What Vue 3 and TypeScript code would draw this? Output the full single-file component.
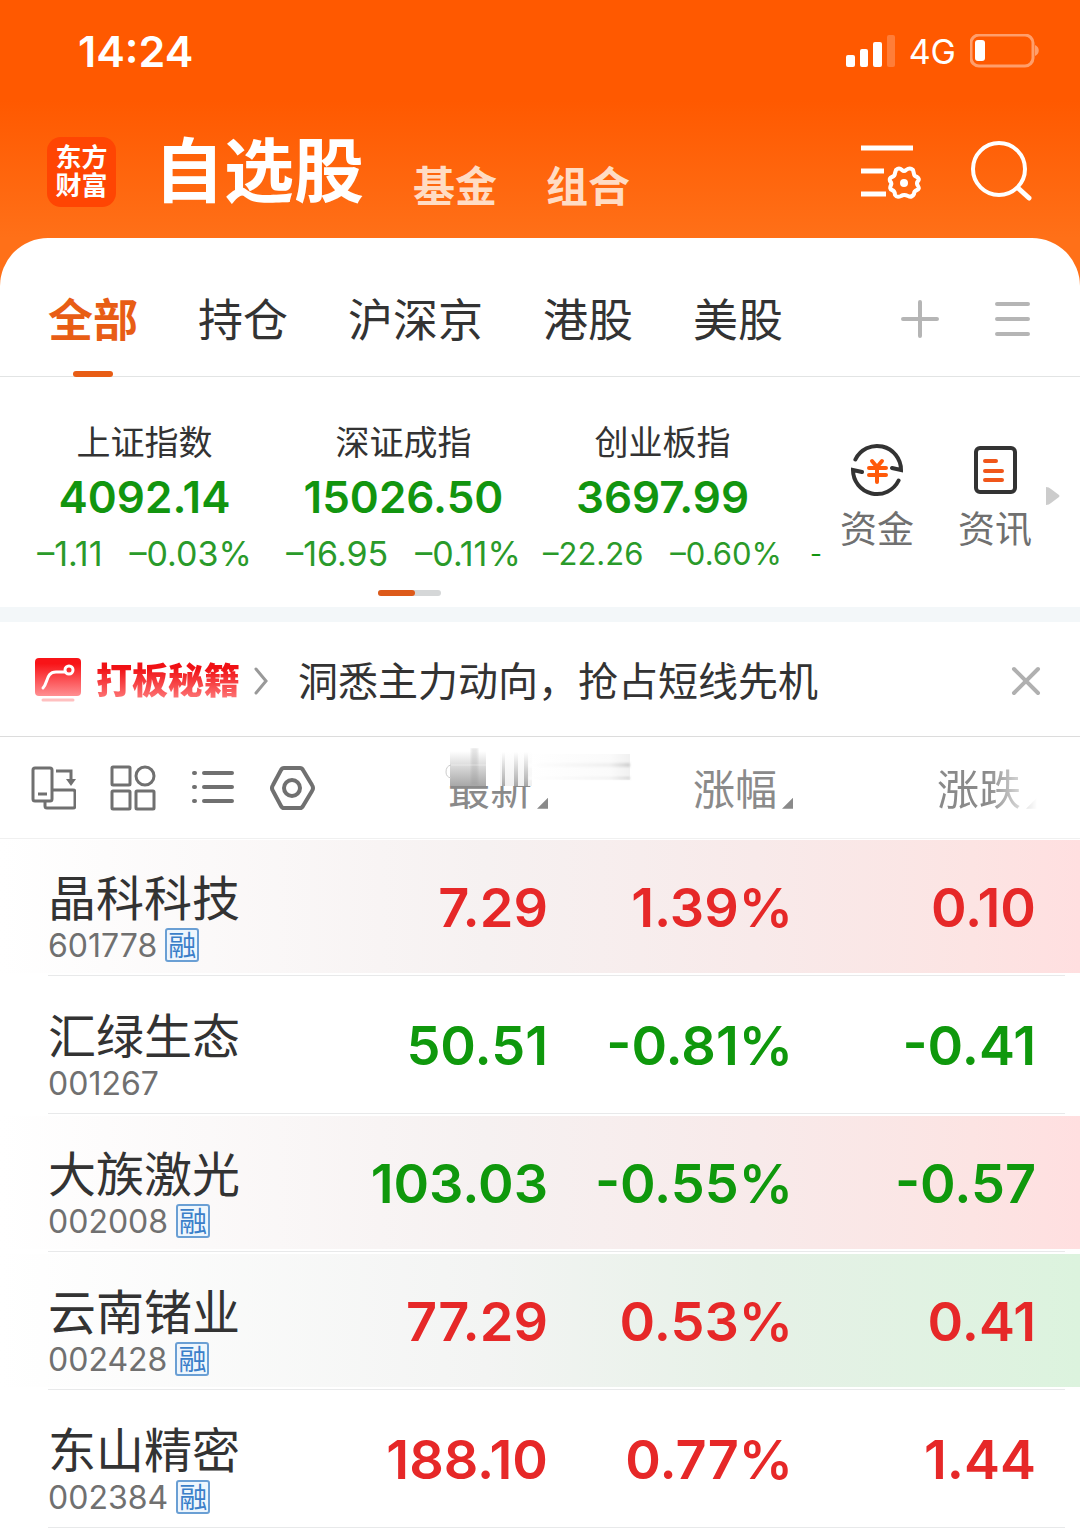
<script setup lang="ts">
import { ref } from 'vue'

interface IndexQuote { name: string; value: string; change: string; percent: string; small?: boolean }
interface Stock {
  name: string; code: string; margin: boolean
  price: string; percent: string; change: string
  trend: 'up' | 'down'; tint: 'red' | 'green' | 'none'
}

const tabs = ['全部', '持仓', '沪深京', '港股', '美股']
const activeTab = ref('全部')
const showPromo = ref(true)

const indices: IndexQuote[] = [
  { name: '上证指数', value: '4092.14', change: '–1.11', percent: '–0.03%' },
  { name: '深证成指', value: '15026.50', change: '–16.95', percent: '–0.11%' },
  { name: '创业板指', value: '3697.99', change: '–22.26', percent: '–0.60%', small: true },
]

const stocks: Stock[] = [
  { name: '晶科科技', code: '601778', margin: true, price: '7.29', percent: '1.39%', change: '0.10', trend: 'up', tint: 'red' },
  { name: '汇绿生态', code: '001267', margin: false, price: '50.51', percent: '-0.81%', change: '-0.41', trend: 'down', tint: 'none' },
  { name: '大族激光', code: '002008', margin: true, price: '103.03', percent: '-0.55%', change: '-0.57', trend: 'down', tint: 'red' },
  { name: '云南锗业', code: '002428', margin: true, price: '77.29', percent: '0.53%', change: '0.41', trend: 'up', tint: 'green' },
  { name: '东山精密', code: '002384', margin: true, price: '188.10', percent: '0.77%', change: '1.44', trend: 'up', tint: 'none' },
]
</script>

<template>
  <div class="app">
    <header class="top">
      <div class="status">
        <time class="clock">14:24</time>
        <div class="signals">
          <svg width="50" height="34" viewBox="0 0 50 34" aria-hidden="true">
            <rect x="1" y="21" width="9" height="12" rx="2" fill="#fff" />
            <rect x="15" y="15" width="8" height="18" rx="2" fill="#fff" />
            <rect x="28" y="8" width="9" height="25" rx="2" fill="#fff" />
            <rect x="42" y="1" width="8" height="32" rx="2" fill="#fff" fill-opacity=".22" />
          </svg>
          <span class="network">4G</span>
          <svg width="70" height="34" viewBox="0 0 70 34" aria-hidden="true">
            <rect x="1" y="1" width="62" height="31" rx="8" fill="none" stroke="#fff" stroke-opacity=".42" stroke-width="3" />
            <rect x="5" y="6" width="10" height="21" rx="3" fill="#fff" />
            <path d="M65 11c5 2 5 9 0 11z" fill="#fff" fill-opacity=".42" />
          </svg>
        </div>
      </div>
      <div class="titlebar">
        <div class="logo"><span>东方</span><span>财富</span></div>
        <nav class="sections">
          <h1>自选股</h1>
          <a href="#fund">基金</a>
          <a href="#group">组合</a>
        </nav>
        <div class="tools">
          <button type="button" aria-label="设置">
            <svg width="62" height="56" viewBox="0 0 62 56" fill="none" stroke="#fff" stroke-width="5">
              <path d="M1 4h52M1 27h23M1 50h25" />
              <path stroke-width="4" stroke-linejoin="round" d="M36 26Q39 23 42 26Q44 28 46 26Q50 23 53 26L54 30Q54 32 57 33Q60 35 58 37Q56 39 58 42Q60 45 57 46Q54 47 54 50Q52 54 48 52Q44 50 41 52Q37 54 35 51Q35 47 32 46Q29 45 31 41Q32 39 30 37Q29 34 32 33Q35 32 35 29Z" />
              <circle cx="44" cy="39" r="4" fill="#fff" stroke="none" />
            </svg>
          </button>
          <button type="button" aria-label="搜索">
            <svg width="62" height="62" viewBox="0 0 62 62" fill="none" stroke="#fff" stroke-width="4" stroke-linecap="round">
              <circle cx="29" cy="28" r="26" />
              <path d="M48 47l11 10" stroke-width="5" />
            </svg>
          </button>
        </div>
      </div>
    </header>

    <main class="sheet">
      <nav class="tabs">
        <button
          v-for="tab in tabs" :key="tab" type="button"
          :class="['tab', { active: tab === activeTab }]" @click="activeTab = tab"
        >{{ tab }}</button>
        <div class="tab-tools">
          <button type="button" aria-label="添加">
            <svg width="38" height="38" viewBox="0 0 38 38" stroke="#b5b5b5" stroke-width="4" stroke-linecap="round"><path d="M2 19h34M19 2v34" /></svg>
          </button>
          <button type="button" aria-label="菜单">
            <svg width="36" height="38" viewBox="0 0 36 38" stroke="#b5b5b5" stroke-width="4" stroke-linecap="round"><path d="M3 4h31M3 19h31M3 34h31" /></svg>
          </button>
        </div>
      </nav>

      <section class="market">
        <div class="indices">
          <article v-for="item in indices" :key="item.name" class="index">
            <h2>{{ item.name }}</h2>
            <strong>{{ item.value }}</strong>
            <p :class="{ small: item.small }"><span>{{ item.change }}</span><span>{{ item.percent }}</span></p>
          </article>
          <span class="next-index">-</span>
          <div class="pager"><i></i></div>
        </div>
        <div class="shortcuts">
          <a href="#capital">
            <svg width="54" height="54" viewBox="0 0 54 54" fill="none" stroke="#333" stroke-width="4">
              <path d="M5.400 16.500A24 24 0 0 1 51 27L42 25" stroke-linecap="round" />
              <path d="M48.600 37.500A24 24 0 0 1 3 27L12 29" stroke-linecap="round" />
              <path d="M22 18l5 6 5-6M19 25h17M19 32h17M27 24v15" stroke="#ff5a0a" stroke-linecap="round" />
            </svg>
            资金
          </a>
          <a href="#news">
            <svg width="54" height="54" viewBox="0 0 54 54" fill="none" stroke="#333" stroke-width="4">
              <rect x="8" y="5" width="39" height="44" rx="4" />
              <path d="M17 18h11M17 28h17M17 37h17" stroke="#f0561a" stroke-linecap="round" />
            </svg>
            资讯
          </a>
          <svg class="more" width="14" height="18" viewBox="0 0 14 18" aria-hidden="true"><path d="M0 0q3 0 5 2l8 6q1 1 0 2l-8 6q-2 2-5 2z" fill="#ccc" /></svg>
        </div>
      </section>

      <section v-if="showPromo" class="promo">
        <svg width="48" height="46" viewBox="0 0 48 46" fill="none" aria-hidden="true">
          <defs>
            <linearGradient id="promo-fill" x1="0" y1="0" x2="0" y2="1"><stop offset=".15" stop-color="#f81418" /><stop offset="1" stop-color="#ff8f92" /></linearGradient>
          </defs>
          <rect x="1" y="0" width="46" height="38" rx="4" fill="url(#promo-fill)" />
          <path d="M9 30C14 25 12 14 22 14H31" stroke="#fff" stroke-width="3" stroke-linecap="round" />
          <circle cx="35" cy="12" r="4" stroke="#fff" stroke-width="3" />
          <path d="M9 42h30" stroke="#ffc0c0" stroke-width="3" stroke-linecap="round" />
        </svg>
        <b>打板秘籍</b>
        <svg width="14" height="28" viewBox="0 0 14 28" fill="none" aria-hidden="true"><path d="M2 2l10 12L2 26" stroke="#999" stroke-width="3" stroke-linecap="round" /></svg>
        <a href="#promo">洞悉主力动向，抢占短线先机</a>
        <button type="button" aria-label="关闭" @click="showPromo = false">
          <svg width="30" height="30" viewBox="0 0 30 30" stroke="#b0b0b0" stroke-width="4" stroke-linecap="round"><path d="M3 3l24 24M27 3L3 27" /></svg>
        </button>
      </section>

      <table class="quotes">
        <colgroup><col class="col-name" /><col class="col-price" /><col class="col-percent" /><col class="col-change" /></colgroup>
        <thead>
          <tr>
            <th scope="col">
              <div class="views">
                <button type="button" aria-label="横屏">
                  <svg width="46" height="46" viewBox="0 0 46 46" fill="none" stroke="#707070" stroke-width="3">
                    <rect x="3" y="3" width="19" height="33" rx="2" /><path d="M8 29h9M26 6h15v10" /><path d="M36 14h10l-5 7z" fill="#707070" stroke="none" />
                    <path d="M23 25h20q2 0 2 2v14q0 2-2 2H17q-2 0-2-2v-4" />
                  </svg>
                </button>
                <button type="button" aria-label="宫格">
                  <svg width="46" height="46" viewBox="0 0 46 46" fill="none" stroke="#707070" stroke-width="3">
                    <rect x="2" y="2" width="18" height="18" rx="1" /><circle cx="35" cy="11" r="9" /><rect x="2" y="26" width="18" height="18" rx="1" /><rect x="26" y="26" width="18" height="18" rx="1" />
                  </svg>
                </button>
                <button type="button" aria-label="列表">
                  <svg width="46" height="46" viewBox="0 0 46 46" fill="none" stroke="#707070" stroke-width="4" stroke-linecap="round">
                    <path d="M14 8h28M14 22h28M14 36h28M4 8h1M4 22h1M4 36h1" />
                  </svg>
                </button>
                <button type="button" aria-label="选项">
                  <svg width="46" height="46" viewBox="0 0 46 46" fill="none" stroke="#707070" stroke-width="4" stroke-linejoin="round">
                    <path d="M14 3H30Q32 3 33 5L42 20Q44 23 42 26L33 41Q32 43 30 43H14Q12 43 11 41L3 26Q1 23 3 20L11 5Q12 3 14 3Z" /><circle cx="22" cy="23" r="8" />
                  </svg>
                </button>
              </div>
            </th>
            <th scope="col">
              <button type="button" class="sort">最新<i></i></button>
              <svg class="smudge" width="190" height="40" viewBox="0 0 190 40" aria-hidden="true">
                <defs>
                  <linearGradient id="down" x1="0" y1="0" x2="0" y2="1"><stop offset="0" stop-color="#fff" /><stop offset="1" stop-color="#a8a8a8" /></linearGradient>
                  <linearGradient id="down-soft" x1="0" y1="0" x2="0" y2="1"><stop offset="0" stop-color="#fff" /><stop offset="1" stop-color="#f0f0f0" /></linearGradient>
                  <linearGradient id="across" x1="0" y1="0" x2="1" y2="0"><stop offset="0" stop-color="#fff" /><stop offset=".8" stop-color="#f0f0f0" /><stop offset="1" stop-color="#cfcfcf" /></linearGradient>
                  <filter id="soft" x="-10%" y="-60%" width="120%" height="220%"><feGaussianBlur stdDeviation="1" /></filter>
                </defs>
                <path d="M4 0h84v38H4z" fill="#fff" />
                <path d="M55 4h32v34H55z" fill="url(#down-soft)" />
                <path d="M5 3h36v35H5z" fill="url(#down)" />
                <path d="M26 0h7v37h-7z" fill="#888" fill-opacity=".22" filter="url(#soft)" />
                <path d="M57 4h3v34h-3zM69 4h4v34h-4zM79 4h4v34h-4z" fill="url(#down)" />
                <path d="M84 6h101v26H84z" fill="url(#across)" fill-opacity=".3" />
                <path d="M84 15h101v4H84zM84 29h101v2H84z" fill="url(#across)" filter="url(#soft)" />
                <path d="M6 17q-5 1-5 7q0 5 5 6" fill="none" stroke="#ccc" />
                <path d="M6 17h36" stroke="#fff" stroke-opacity=".2" stroke-width="2" />
              </svg>
            </th>
            <th scope="col"><button type="button" class="sort">涨幅<i></i></button></th>
            <th scope="col"><button type="button" class="sort fade">涨跌<i></i></button></th>
          </tr>
        </thead>
        <tbody>
          <tr v-for="stock in stocks" :key="stock.code" :class="[stock.trend, 'tint-' + stock.tint]">
            <th scope="row">
              <span class="stock-name">{{ stock.name }}</span>
              <span class="stock-code">{{ stock.code }}<em v-if="stock.margin">融</em></span>
            </th>
            <td>{{ stock.price }}</td>
            <td>{{ stock.percent }}</td>
            <td>{{ stock.change }}</td>
          </tr>
        </tbody>
      </table>
    </main>
  </div>
</template>

<style>
body { margin: 0; background: #fff; }
</style>

<style scoped>
.app {
  font-family: Inter, "Noto Sans CJK SC", sans-serif;
  color: #333;
  background: linear-gradient(#ff5900 0, #ff5900 100px, #ff7018 238px, #ff7018 300px, #fff 300px);
}
button { padding: 0; border: 0; background: none; font: inherit; color: inherit; cursor: pointer; }
a { color: inherit; text-decoration: none; }
svg { display: block; flex: none; }
h1, h2, p { margin: 0; }

.status { display: flex; align-items: center; justify-content: space-between; height: 102px; padding: 0 40px 0 78px; color: #fff; }
.clock { font-size: 43px; font-weight: 600; }
.signals { display: flex; align-items: center; gap: 14px; }
.network { font-size: 34px; }
.titlebar { display: flex; align-items: center; box-sizing: border-box; height: 136px; padding: 4px 48px 0 47px; }
.logo {
  display: flex; flex-direction: column; align-items: center;
  width: 69px; height: 70px; border-radius: 14px; background: #ff4503; color: #fff;
  font: 700 26px/28px "Noto Sans CJK SC", sans-serif;
  box-sizing: border-box; padding-top: 5px;
}
.sections { display: flex; align-items: flex-end; gap: 49px; margin-left: 38px; color: #ffdcc4; font-size: 42px; line-height: 74px; font-weight: 700; }
.sections h1 { color: #fff; font-size: 70px; line-height: 104px; font-weight: 700; }
.tools { display: flex; align-items: center; gap: 48px; margin-left: auto; }

.sheet { background: #fff; border-radius: 48px 48px 0 0; }
.tabs { display: flex; align-items: stretch; gap: 60px; height: 138px; padding: 0 50px 0 48px; border-bottom: 1px solid #e2e4e4; }
.tab { position: relative; padding-top: 27px; font-size: 45px; line-height: 66px; }
.tab.active { color: #e85d15; font-weight: 700; }
.tab.active::after { content: ""; position: absolute; left: 25px; right: 25px; bottom: -1px; height: 6px; border-radius: 3px; background: #e85d15; }
.tab-tools { display: flex; align-items: center; gap: 55px; margin-left: auto; padding-top: 24px; }

.market { display: flex; height: 230px; border-bottom: 15px solid #f3f7f9; }
.indices { position: relative; display: flex; flex: 1; padding-left: 15px; overflow: hidden; }
.index { display: flex; flex-direction: column; align-items: center; flex: 0 0 259px; padding-top: 41px; }
.index h2 { font-size: 34px; line-height: 50px; font-weight: 400; }
.index strong { font-size: 44px; line-height: 58px; font-weight: 600; color: #12950f; }
.index p { display: flex; gap: 27px; font-size: 34px; line-height: 56px; color: #2a9a2a; white-space: nowrap; }
.index p.small { font-size: 31px; }
.next-index { padding: 150px 0 0 18px; font-size: 26px; line-height: 54px; color: #12950f; }
.pager { position: absolute; left: 378px; bottom: 11px; width: 63px; height: 6px; border-radius: 3px; background: #d5d7d8; }
.pager i { display: block; width: 37px; height: 6px; border-radius: 3px; background: #dd5a1a; }
.shortcuts { display: flex; align-items: center; gap: 44px; padding: 8px 20px 0 0; color: #707070; font-size: 37px; line-height: 54px; }
.shortcuts a { display: flex; flex-direction: column; align-items: center; gap: 6px; padding-top: 8px; }
.more { margin-left: -30px; }

.promo { display: flex; align-items: center; box-sizing: border-box; height: 115px; padding: 3px 39px 0 34px; border-bottom: 1px solid #dcdcdc; }
.promo b {
  margin: 0 14px; font-size: 36px; line-height: 52px; font-weight: 900; color: transparent;
  background: linear-gradient(#f01014 25%, #ff8080 90%); background-clip: text;
}
.promo a { margin-left: 30px; padding-top: 2px; font-size: 40px; line-height: 58px; }
.promo button { margin-left: auto; }

.quotes { width: 100%; border-collapse: collapse; table-layout: fixed; }
.col-name { width: 330px; }
.col-price { width: 218px; }
.col-percent { width: 245px; }
.quotes th, .quotes td { padding: 0; }
.quotes thead tr { height: 101px; border-bottom: 1px solid #f0f0f0; }
.quotes thead th { position: relative; padding-top: 2px; font-weight: 400; text-align: right; }
.views { display: flex; gap: 34px; padding-left: 30px; }
.sort { padding-top: 3px; color: #8a8a8a; font-size: 42px; line-height: 60px; white-space: nowrap; }
.sort i { display: inline-block; width: 11px; height: 11px; margin-left: 5px; vertical-align: -4px; background: #8a8a8a; clip-path: polygon(100% 0, 100% 100%, 0 100%); }
.quotes th:last-child .sort { margin-right: 43px; }
.fade { -webkit-mask-image: linear-gradient(90deg, #000 50%, transparent); mask-image: linear-gradient(90deg, #000 50%, transparent); }
.smudge { position: absolute; right: -87px; top: 11px; z-index: 1; }

.quotes tbody tr {
  --tint: #fff, #fff;
  height: 138px;
  background:
    linear-gradient(#e8e9ea, #e8e9ea) 48px 100% / calc(100% - 63px) 1px no-repeat,
    linear-gradient(90deg, var(--tint)) 0 2px / 100% calc(100% - 5px) no-repeat;
}
.quotes .tint-red { --tint: #fff, #f6f1f1 45%, #f8eaea 70%, #fce4e3 90%, #ffdfe0; }
.quotes .tint-green { --tint: #fff, #f3f4f3 45%, #e6f1e7 70%, #dcf3de; }
.quotes tbody th { padding: 18px 0 0 48px; font-weight: 400; text-align: left; }
.stock-name { display: block; font-size: 48px; line-height: 58px; }
.stock-code { display: flex; align-items: center; gap: 8px; height: 34px; font-size: 32px; color: #707070; }
.stock-code em { box-sizing: border-box; height: 34px; padding: 0 1px; border: 2px solid #6a9fd4; border-radius: 3px; color: #3b7fc9; background: #eef6fd; font: 28px/29px "Noto Sans CJK SC", sans-serif; }
.quotes td { font-size: 54px; font-weight: 600; text-align: right; white-space: nowrap; }
.quotes td:last-child { padding-right: 44px; }
.up td { color: #e62828; }
.down td { color: #0f980c; }
</style>
